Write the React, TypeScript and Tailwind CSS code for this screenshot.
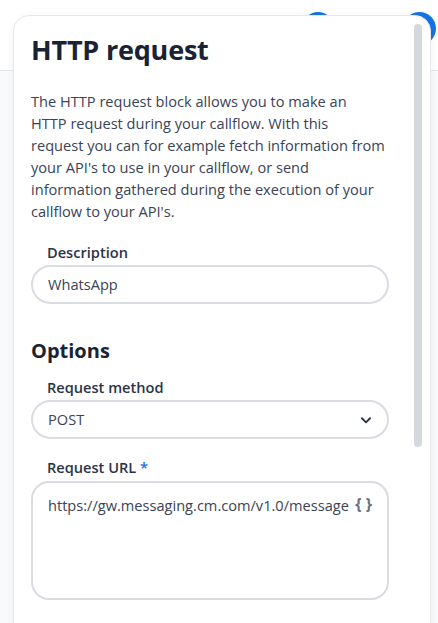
import React from "react";

export default function App() {
  const font = { fontFamily: '"Open Sans", "Noto Sans", sans-serif' };
  return (
    <div className="relative w-[438px] h-[623px] overflow-hidden bg-white" style={font}>
      {/* background header */}
      <div className="h-[71px] border-b border-[#e5e7eb] bg-white" />
      <div className="h-[552px] bg-[#f9fafb]" />
      <div className="absolute left-[302px] top-[12px] w-[32px] h-[32px] rounded-full bg-[#1473e6]" />
      <div className="absolute left-[403px] top-[12px] w-[33px] h-[33px] rounded-full bg-[#1473e6]" />

      {/* popover card */}
      <div className="absolute left-[13px] top-[15px] w-[418px] h-[640px] rounded-[16px] border border-[#e5e7eb] bg-white shadow-[0_2px_8px_rgba(0,0,0,0.06)] overflow-hidden">
        <div className="absolute right-[8px] top-[8px] w-[8px] h-[423px] rounded-full bg-[#d5d8dd]" />
        <div className="pl-[17px] pr-[41px] pt-[16px]">
          <h1 className="text-[27px] font-bold leading-[36px] text-[#1a2233] tracking-[-0.2px]">HTTP request</h1>
          <p className="mt-[22px] text-[14.6px] leading-[22px] text-[#3a4357] whitespace-nowrap">
            The HTTP request block allows you to make an
            <br />
            HTTP request during your callflow. With this
            <br />
            request you can for example fetch information from
            <br />
            your API's to use in your callflow, or send
            <br />
            information gathered during the execution of your
            <br />
            callflow to your API's.
          </p>

          <div className="mt-[19px]">
            <label className="block pl-[16px] text-[14.6px] font-semibold leading-[22px] text-[#2b3447]">Description</label>
            <div className="mt-[2px] h-[39px] rounded-full border-2 border-[#d9dce1] flex items-center pl-[15px] text-[14.6px] text-[#3a4357]">
              WhatsApp
            </div>
          </div>

          <h2 className="mt-[33px] text-[20px] font-bold leading-[28px] text-[#1a2233]">Options</h2>

          <div className="mt-[11px]">
            <label className="block pl-[16px] text-[14.6px] font-semibold leading-[22px] text-[#2b3447]">Request method</label>
            <div className="mt-[2px] h-[39px] rounded-full border-2 border-[#d9dce1] flex items-center justify-between pl-[15px] pr-[14px] text-[14.6px] text-[#3a4357]">
              <span>POST</span>
              <svg width="14" height="14" viewBox="0 0 24 24" fill="none" stroke="#2b3447" strokeWidth="3.2" strokeLinecap="round" strokeLinejoin="round">
                <path d="M5 9l7 7 7-7" />
              </svg>
            </div>
          </div>

          <div className="mt-[17px]">
            <label className="block pl-[16px] text-[14.6px] font-semibold leading-[22px] text-[#2b3447]">
              Request URL <span className="text-[#1473e6]">*</span>
            </label>
            <div className="mt-[3px] h-[119px] rounded-[18px] border-2 border-[#d9dce1] flex items-start justify-between pl-[15px] pr-[15px] pt-[11px] text-[14.6px] text-[#3a4357]">
              <span className="leading-[22px] whitespace-nowrap">https://gw.messaging.cm.com/v1.0/message</span>
              <span className="leading-[20px] text-[16px] font-bold text-[#6b7280] whitespace-pre">{"{ }"}</span>
            </div>
          </div>
        </div>
      </div>
    </div>
  );
}
